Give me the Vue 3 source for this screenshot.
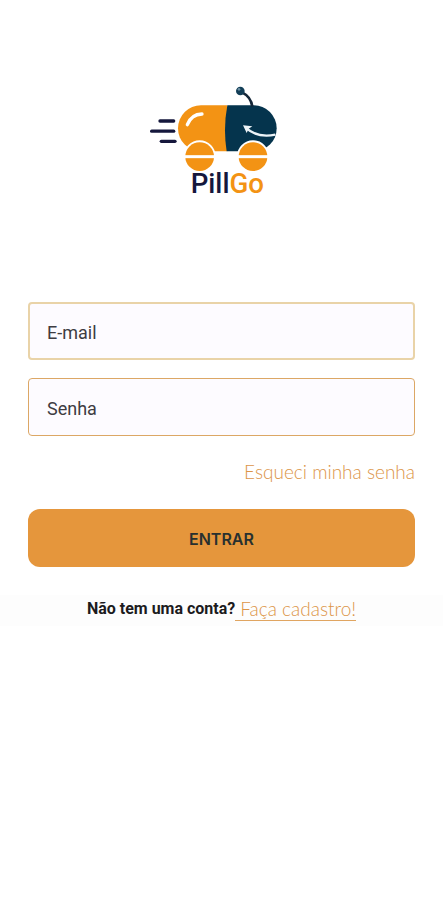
<script setup>
import { ref } from 'vue'

const email = ref('')
const password = ref('')
</script>

<template>
  <main class="login">
    <svg class="logo" viewBox="0 0 450 390" role="img" aria-label="PillGo">
      <g stroke="#15173c" stroke-width="10" stroke-linecap="round">
        <path d="M60 138H101" />
        <path d="M35 168.500H101" />
        <path d="M64 199H105" />
      </g>
      <path d="M262 91H183a69 69 0 0 0 0 138H262Z" fill="#f39314" />
      <path d="M262 91H341a69 69 0 0 1 0 138H260Q249 160 262 91Z" fill="#05344d" />
      <path d="M142 149Q154 118 186 117" fill="none" stroke="#fff" stroke-width="10" stroke-linecap="round" />
      <path d="M337 95Q333 65 306 52" fill="none" stroke="#142638" stroke-width="8" />
      <circle cx="301" cy="48" r="13" fill="#123e57" />
      <circle cx="297" cy="43" r="4" fill="#6f92a5" />
      <path d="M317 158Q352 190 406 179" fill="none" stroke="#eef4f8" stroke-width="7" />
      <path d="M309 151L337 154L326 161L320 174Z" fill="#eef4f8" />
      <g v-for="x in [179, 339]" :key="x">
        <circle :cx="x" cy="244" r="48" fill="#fff" />
        <circle :cx="x" cy="245" r="43" fill="#f39314" />
        <path :d="`M${x - 45} 245h90`" stroke="#fff" stroke-width="9" />
      </g>
      <text class="wordmark" x="152" y="355"><tspan fill="#15173c">Pill</tspan><tspan fill="#f39314">Go</tspan></text>
    </svg>

    <form class="form" @submit.prevent>
      <input v-model="email" class="field soft" type="email" placeholder="E-mail" aria-label="E-mail" />
      <input v-model="password" class="field" type="password" placeholder="Senha" aria-label="Senha" />
      <a class="link forgot" href="#">Esqueci minha senha</a>
      <button class="submit" type="submit">ENTRAR</button>
    </form>

    <p class="signup">
      <span class="question">Não tem uma conta?</span>
      <a class="link register" href="#">Faça cadastro!</a>
    </p>
  </main>
</template>

<style>
body {
  background: #fff;
}
</style>

<style scoped>
.login {
  display: flex;
  flex-direction: column;
  align-items: center;
  padding-top: 75px;
  font-family: Roboto, sans-serif;
}

.logo {
  width: 150px;
  height: 130px;
  margin-right: 14px;
}

.wordmark {
  font-family: Roboto, sans-serif;
  font-size: 83px;
  font-weight: 500;
}

.form {
  display: flex;
  flex-direction: column;
  align-self: stretch;
  gap: 18px;
  padding: 97px 28px 0;
}

.field {
  box-sizing: border-box;
  width: 100%;
  height: 58px;
  padding: 2px 18px 0;
  border: 1px solid #dca765;
  border-radius: 4px;
  outline: 0;
  background: #fdfbff;
  color: #3e3c42;
  font: 18px Roboto, sans-serif;
}

.soft {
  border: 2px solid #e9d3a8;
  padding: 2px 17px 0;
}

.field::placeholder {
  color: #3e3c42;
  opacity: 1;
}

.link {
  color: #dc9548;
  font-family: Lato, sans-serif;
  font-size: 19px;
  font-weight: 300;
  line-height: 24px;
  text-decoration: none;
}

.forgot {
  align-self: flex-end;
  margin: 6px 0 7px;
}

.submit {
  height: 58px;
  padding: 2px 0 0;
  border: 0;
  border-radius: 12px;
  background: #e5963c;
  color: #28302f;
  font: 600 16px Inter, sans-serif;
}

.signup {
  display: flex;
  align-self: stretch;
  justify-content: center;
  align-items: center;
  margin: 28px 0 0;
  padding: 2px 0 5px;
  background: #fdfdfd;
}

.question {
  color: #1c1b1d;
  font-size: 16px;
  font-weight: 700;
  line-height: 24px;
}

.register {
  padding-left: 5px;
  border-bottom: 1px solid #e0a561;
  line-height: 22px;
}
</style>
